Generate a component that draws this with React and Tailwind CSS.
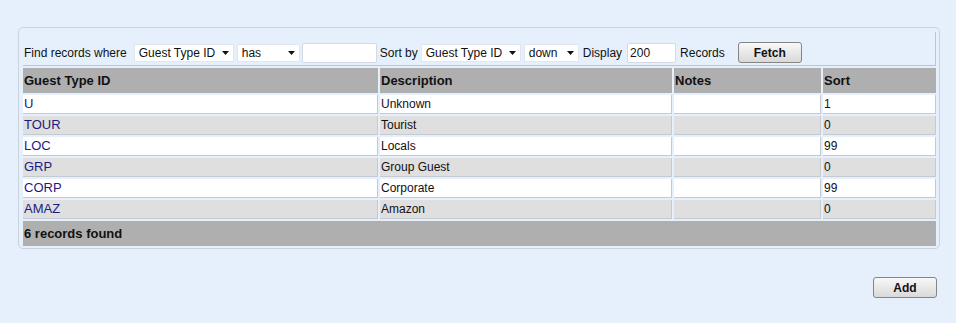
import React from "react";

const rows = [
  { id: "U", description: "Unknown", notes: "", sort: "1" },
  { id: "TOUR", description: "Tourist", notes: "", sort: "0" },
  { id: "LOC", description: "Locals", notes: "", sort: "99" },
  { id: "GRP", description: "Group Guest", notes: "", sort: "0" },
  { id: "CORP", description: "Corporate", notes: "", sort: "99" },
  { id: "AMAZ", description: "Amazon", notes: "", sort: "0" },
];

const Caret = () => (
  <svg width="7" height="4" viewBox="0 0 7 4" className="shrink-0">
    <path d="M0 0h7L3.5 4z" fill="#111" />
  </svg>
);

const FakeSelect = ({ value, className }) => (
  <div
    className={`flex h-[18px] items-center justify-between border border-[#e1e7ee] bg-white pl-[4px] pr-[4px] text-[12px] text-[#111] ${className}`}
  >
    <span>{value}</span>
    <Caret />
  </div>
);

const Button = ({ children, className = "" }) => (
  <button
    className={`flex h-[21px] w-[64px] items-center justify-center rounded-[3px] border border-[#858585] bg-linear-to-b from-[#f8f8f8] to-[#d9d9d9] text-[12px] font-bold text-[#111] ${className}`}
  >
    {children}
  </button>
);

export default function App() {
  return (
    <div className="min-h-[323px] bg-[#e6f0fc] pt-[27px] pl-[18px] pr-[16px] font-['Liberation_Sans',Arial,sans-serif] text-[12px] text-[#111]">
      <div className="rounded-[5px] border border-[#cad2dc] pt-[4px] pl-[4px] pr-[3px] pb-[2px]">
        {/* filter bar */}
        <div className="flex h-[34px] items-center border-r border-b border-[#c3c3c3] pt-[10px] pb-[2px]">
          <span className="pl-[1px]">Find records where</span>
          <FakeSelect value="Guest Type ID" className="ml-[7px] w-[100px]" />
          <FakeSelect value="has" className="ml-[3px] w-[63px]" />
          <input
            className="ml-[2px] h-[20px] w-[75px] rounded-[2px] border border-[#d3d9e0] bg-white px-[2px] text-[12px] outline-none"
            defaultValue=""
          />
          <span className="ml-[3px]">Sort by</span>
          <FakeSelect value="Guest Type ID" className="ml-[3px] w-[100px]" />
          <FakeSelect value="down" className="ml-[3px] w-[55px]" />
          <span className="ml-[4px]">Display</span>
          <input
            className="ml-[5px] h-[20px] w-[49px] rounded-[2px] border border-[#d3d9e0] bg-white px-[2px] text-[12px] outline-none"
            defaultValue="200"
          />
          <span className="ml-[4px]">Records</span>
          <Button className="ml-[13px]">Fetch</Button>
        </div>

        {/* results grid */}
        <div className="mt-[2px] grid grid-cols-[355px_292px_147px_113px] gap-[2px]">
          {["Guest Type ID", "Description", "Notes", "Sort"].map((h) => (
            <div
              key={h}
              className="flex h-[25px] items-center bg-[#afafaf] pl-[1px] text-[13px] font-bold text-[#111]"
            >
              {h}
            </div>
          ))}

          {rows.map((r, i) => {
            const bg = i % 2 === 0 ? "bg-white" : "bg-[#dfdfdf]";
            const cell = `flex h-[19px] items-center border-r border-b border-[#c5cad0] pl-[1px] ${bg}`;
            return (
              <React.Fragment key={r.id}>
                <div className={`${cell} text-[13px] text-[#1d1a82]`}>{r.id}</div>
                <div className={cell}>{r.description}</div>
                <div className={cell}>{r.notes}</div>
                <div className={cell}>{r.sort}</div>
              </React.Fragment>
            );
          })}

          <div className="col-span-4 flex h-[25px] items-center bg-[#afafaf] pl-[1px] text-[13px] font-bold">
            6 records found
          </div>
        </div>
      </div>

      <div className="mt-[28px] flex justify-end pr-[3px]">
        <Button>Add</Button>
      </div>
    </div>
  );
}
